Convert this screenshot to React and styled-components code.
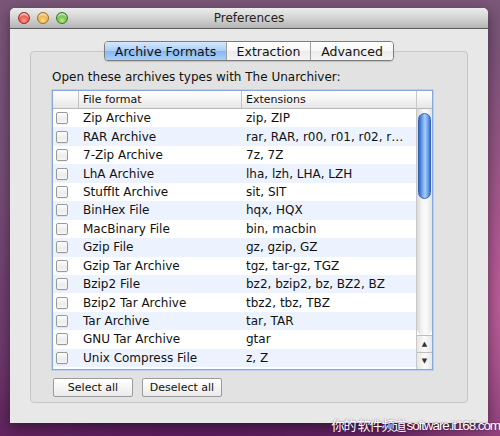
import React from "react";
import styled, { createGlobalStyle } from "styled-components";

const GlobalStyle = createGlobalStyle`
  html, body {
    margin: 0;
    padding: 0;
  }
  body {
    width: 500px;
    height: 436px;
    overflow: hidden;
    font-family: "Lucida Grande", "DejaVu Sans", sans-serif;
    background:
      radial-gradient(ellipse 160px 260px at 520px 300px, #c2609c 0%, rgba(194, 96, 156, 0) 100%),
      radial-gradient(ellipse 300px 80px at 200px 450px, #5a1a5e 0%, rgba(90, 26, 94, 0) 100%),
      linear-gradient(180deg, #7a5679 0%, #774e76 40%, #6e3a6e 80%, #64285f 100%);
  }
`;

const Desktop = styled.div`
  position: relative;
  width: 500px;
  height: 436px;
  padding: 8px 12px 0 10px;
  box-sizing: border-box;
`;

const Window = styled.div`
  width: 478px;
  height: 415px;
  display: flex;
  flex-direction: column;
  border-radius: 5px 5px 0 0;
  background: #e8e8e8;
  box-shadow: 0 4px 14px rgba(0, 0, 0, 0.45);
  overflow: hidden;
`;

const TitleBar = styled.div`
  height: 20px;
  flex: none;
  display: flex;
  align-items: center;
  position: relative;
  background: linear-gradient(180deg, #ececec 0%, #d6d6d6 45%, #b4b4b4 100%);
  border-bottom: 1px solid #5a5a5a;
`;

const Lights = styled.div`
  display: flex;
  gap: 7px;
  padding-left: 8px;
`;

const Light = styled.span`
  width: 12px;
  height: 12px;
  border-radius: 50%;
  box-sizing: border-box;
  border: 1px solid ${(p) => p.$edge};
  background: radial-gradient(circle at 50% 75%, ${(p) => p.$glow} 0%, ${(p) => p.$color} 60%, ${(p) => p.$edge} 100%);
  box-shadow: inset 0 3px 2px -1px rgba(255, 255, 255, 0.75);
`;

const Title = styled.div`
  flex: 1;
  text-align: center;
  font-size: 12px;
  color: #222;
  margin-right: 58px;
`;

const Content = styled.div`
  flex: 1;
  display: flex;
  flex-direction: column;
  align-items: center;
  padding: 12px 20px 20px;
`;

const Tabs = styled.div`
  display: flex;
  position: relative;
  z-index: 1;
  height: 18px;
  border: 1px solid #7c7c7c;
  border-radius: 4px;
  overflow: hidden;
  box-shadow: 0 1px 1px rgba(0, 0, 0, 0.15);
`;

const Tab = styled.div`
  width: ${(p) => p.$w}px;
  display: flex;
  align-items: center;
  justify-content: center;
  font-size: 12.5px;
  color: #111;
  border-left: ${(p) => (p.$first ? "none" : "1px solid #a0a0a0")};
  background: ${(p) =>
    p.$active
      ? "linear-gradient(180deg, #d6e8fc 0%, #a9cdf6 50%, #86b8f0 51%, #a8d0fa 100%)"
      : "linear-gradient(180deg, #ffffff 0%, #f6f6f6 50%, #ececec 51%, #f4f4f4 100%)"};
`;

const GroupBox = styled.div`
  align-self: stretch;
  flex: 1;
  margin-top: -10px;
  padding: 17px 0 0 21px;
  border: 1px solid #c6c6c6;
  border-radius: 4px;
  background: #e2e2e2;
  display: flex;
  flex-direction: column;
`;

const Label = styled.div`
  font-size: 12px;
  line-height: 16px;
  color: #111;
  margin-bottom: 5px;
`;

const Table = styled.div`
  width: 381px;
  height: 280px;
  box-sizing: border-box;
  border: 1px solid #86a8dc;
  box-shadow: 0 0 0 1px #b9d0f0;
  background: #fff;
  display: flex;
  overflow: hidden;
`;

const Rows = styled.div`
  flex: 1;
  display: flex;
  flex-direction: column;
`;

const grid = "25px 163px 1fr";

const Header = styled.div`
  height: 17px;
  flex: none;
  display: grid;
  grid-template-columns: ${grid};
  background: linear-gradient(180deg, #ffffff 0%, #f4f4f4 50%, #e6e6e6 100%);
  border-bottom: 1px solid #b8b8b8;
`;

const HeadCell = styled.div`
  font-size: 11px;
  line-height: 17px;
  color: #111;
  padding-left: 4px;
  border-left: ${(p) => (p.$first ? "none" : "1px solid #c2c2c2")};
`;

const Row = styled.div`
  height: 18.45px;
  flex: none;
  display: grid;
  grid-template-columns: ${grid};
  align-items: center;
  background: ${(p) => (p.$odd ? "#edf3fe" : "#ffffff")};
`;

const Check = styled.span`
  width: 12px;
  height: 12px;
  margin-left: 3px;
  box-sizing: border-box;
  border: 1px solid #9a9a9a;
  border-radius: 2px;
  background: linear-gradient(180deg, #fdfdfd 0%, #ececec 60%, #f6f6f6 100%);
  box-shadow: 0 1px 0 rgba(0, 0, 0, 0.06);
`;

const Cell = styled.div`
  font-size: 12px;
  color: #111;
  padding-left: 5px;
  white-space: nowrap;
  overflow: hidden;
`;

const ScrollColumn = styled.div`
  width: 15px;
  flex: none;
  display: flex;
  flex-direction: column;
  border-left: 1px solid #c8c8c8;
`;

const ScrollCorner = styled.div`
  height: 17px;
  flex: none;
  background: linear-gradient(180deg, #ffffff 0%, #f4f4f4 50%, #e6e6e6 100%);
  border-bottom: 1px solid #b8b8b8;
`;

const Track = styled.div`
  flex: 1;
  padding: 4px 1px 0;
  background: linear-gradient(90deg, #d9d9d9 0%, #f4f4f4 35%, #fbfbfb 60%, #e4e4e4 100%);
  border-bottom-left-radius: 6px;
  border-bottom-right-radius: 6px;
`;

const Thumb = styled.div`
  height: 86px;
  border-radius: 7px;
  border: 1px solid #3566b8;
  box-sizing: border-box;
  background: linear-gradient(90deg, #2e63c4 0%, #6ea3ea 30%, #a9cdf7 55%, #6aa2ec 80%, #3d74d0 100%);
`;

const Arrow = styled.div`
  height: 16px;
  flex: none;
  display: flex;
  align-items: center;
  justify-content: center;
  font-size: 7px;
  color: #333;
  border-top: 1px solid #bdbdbd;
  background: linear-gradient(90deg, #e6e6e6 0%, #fafafa 50%, #e8e8e8 100%);
`;

const Buttons = styled.div`
  display: flex;
  gap: 9px;
  margin-top: 8px;
  margin-left: 1px;
`;

const Button = styled.button`
  width: ${(p) => p.$w}px;
  height: 19px;
  padding: 0;
  font-family: "Lucida Grande", "DejaVu Sans", sans-serif;
  font-size: 11px;
  color: #111;
  border: 1px solid #9b9b9b;
  border-radius: 2px;
  background: linear-gradient(180deg, #ffffff 0%, #f6f6f6 50%, #e9e9e9 100%);
`;

const Watermark = styled.div`
  position: absolute;
  right: 0;
  bottom: 3px;
  display: flex;
  align-items: baseline;
  color: #fff;
  text-shadow: 0 0 2px rgba(60, 0, 60, 0.6);
`;

const MarkCjk = styled.span`
  font-family: "Noto Sans CJK SC", sans-serif;
  font-size: 13px;
  line-height: 17px;
  letter-spacing: -1px;
  margin-right: 1px;
`;

const MarkLatin = styled.span`
  font-family: "Liberation Sans", sans-serif;
  font-size: 13.5px;
  letter-spacing: -1.1px;
`;

const formats = [
  ["Zip Archive", "zip, ZIP"],
  ["RAR Archive", "rar, RAR, r00, r01, r02, r…"],
  ["7-Zip Archive", "7z, 7Z"],
  ["LhA Archive", "lha, lzh, LHA, LZH"],
  ["StuffIt Archive", "sit, SIT"],
  ["BinHex File", "hqx, HQX"],
  ["MacBinary File", "bin, macbin"],
  ["Gzip File", "gz, gzip, GZ"],
  ["Gzip Tar Archive", "tgz, tar-gz, TGZ"],
  ["Bzip2 File", "bz2, bzip2, bz, BZ2, BZ"],
  ["Bzip2 Tar Archive", "tbz2, tbz, TBZ"],
  ["Tar Archive", "tar, TAR"],
  ["GNU Tar Archive", "gtar"],
  ["Unix Compress File", "z, Z"],
  ["", ""],
];

const App = () => {
  return (
    <Desktop>
      <GlobalStyle />
      <Window>
        <TitleBar>
          <Lights>
            <Light $color="#e2463f" $glow="#ff9c8c" $edge="#9c2a26" />
            <Light $color="#e8a83a" $glow="#ffe08a" $edge="#a66d1c" />
            <Light $color="#62b23c" $glow="#b8ee8c" $edge="#3a7a24" />
          </Lights>
          <Title>Preferences</Title>
        </TitleBar>
        <Content>
          <Tabs>
            <Tab $w={121} $first $active>
              Archive Formats
            </Tab>
            <Tab $w={83}>Extraction</Tab>
            <Tab $w={82}>Advanced</Tab>
          </Tabs>
          <GroupBox>
            <Label>Open these archives types with The Unarchiver:</Label>
            <Table>
              <Rows>
                <Header>
                  <HeadCell $first />
                  <HeadCell>File format</HeadCell>
                  <HeadCell>Extensions</HeadCell>
                </Header>
                {formats.map(([name, ext], i) => (
                  <Row key={i} $odd={i % 2 === 1}>
                    <Check />
                    <Cell>{name}</Cell>
                    <Cell>{ext}</Cell>
                  </Row>
                ))}
              </Rows>
              <ScrollColumn>
                <ScrollCorner />
                <Track>
                  <Thumb />
                </Track>
                <Arrow>▲</Arrow>
                <Arrow>▼</Arrow>
              </ScrollColumn>
            </Table>
            <Buttons>
              <Button $w={80}>Select all</Button>
              <Button $w={80}>Deselect all</Button>
            </Buttons>
          </GroupBox>
        </Content>
      </Window>
      <Watermark>
        <MarkCjk>你的 软件频道</MarkCjk>
        <MarkLatin>software.it168.com</MarkLatin>
      </Watermark>
    </Desktop>
  );
};

export default App;
